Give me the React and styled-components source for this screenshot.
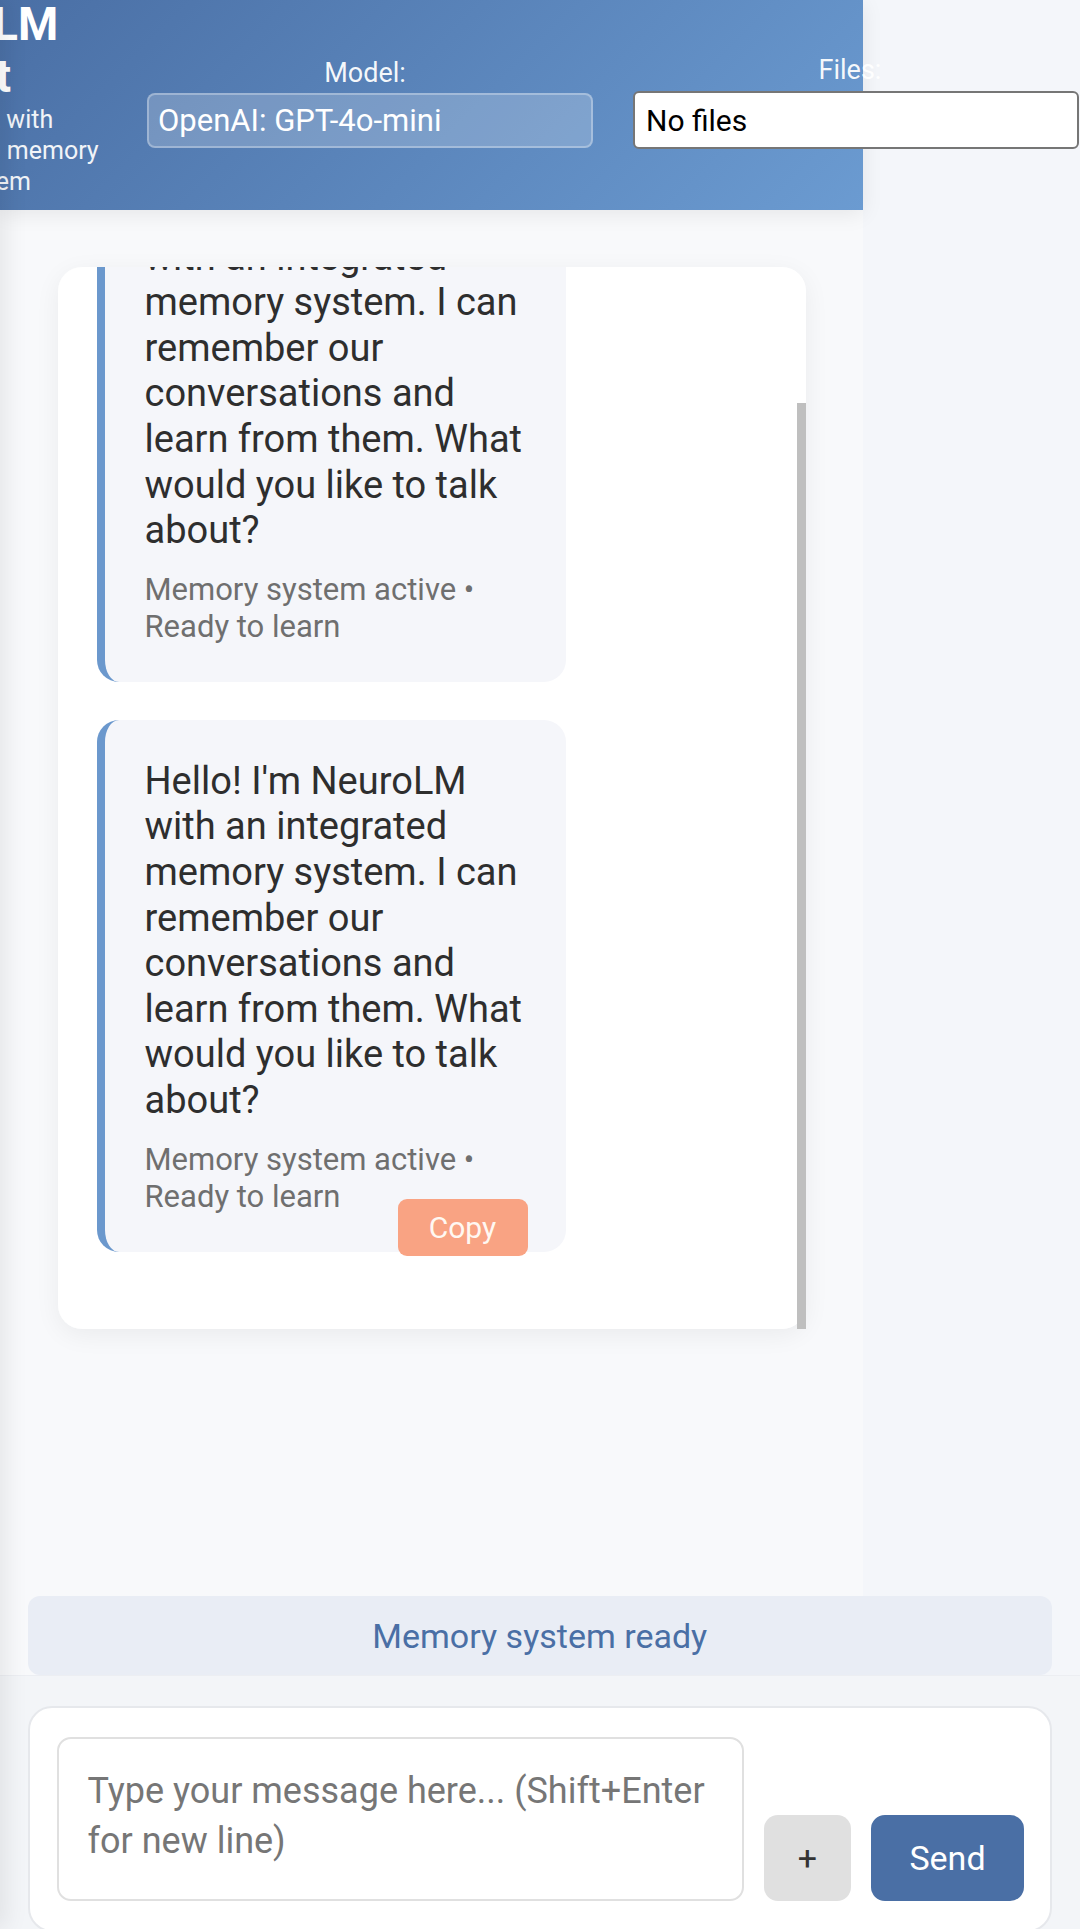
import React, { useLayoutEffect, useRef, useState } from 'react';
import styled, { createGlobalStyle } from 'styled-components';

const GlobalStyle = createGlobalStyle`
  html, body {
    margin: 0;
    padding: 0;
  }
  body {
    background: #f6f7fa;
    font-family: Roboto, "Noto Sans", "Liberation Sans", sans-serif;
    overflow: hidden;
  }
  * {
    box-sizing: border-box;
  }
`;

const Page = styled.div`
  position: relative;
  width: 1080px;
  height: 1929px;
  display: flex;
  flex-direction: column;
  overflow: hidden;
`;

// off-canvas drawer, only its shadow shows on the left edge
const Drawer = styled.aside`
  position: absolute;
  top: 0;
  left: -320px;
  width: 320px;
  height: 100%;
  background: #ffffff;
  box-shadow: 6px 0 22px rgba(0, 0, 0, 0.08);
  z-index: 5;
`;

const Upper = styled.div`
  flex: 1;
  min-height: 0;
  display: grid;
  grid-template-columns: 863px 1fr;
  grid-template-rows: 210px 1fr auto;
  background: #f8f9fb;
`;

const Aside = styled.div`
  grid-column: 2;
  grid-row: 1 / 4;
  background: #f4f6fa;
`;

const Header = styled.header`
  grid-column: 1;
  grid-row: 1;
  position: relative;
  z-index: 2;
  display: flex;
  align-items: flex-start;
  background: linear-gradient(135deg, #4a6fa5 0%, #6b9bd1 100%);
  box-shadow: 0 4px 20px rgba(0, 0, 0, 0.08);
  color: #ffffff;
`;

const Brand = styled.div`
  flex-shrink: 0;
  width: 280px;
  margin-left: -177px;
  margin-top: -2px;
  text-align: center;
`;

const Title = styled.h1`
  margin: 0;
  font-size: 46px;
  font-weight: 700;
  line-height: 52px;
`;

const Tagline = styled.p`
  margin: 2px 0 0;
  font-size: 25px;
  line-height: 31px;
  opacity: 0.92;
`;

const FieldGroup = styled.div`
  flex-shrink: 0;
  width: 446px;
  margin-top: ${({ $top }) => $top}px;
  margin-left: ${({ $offset }) => $offset}px;
  display: flex;
  flex-direction: column;
  align-items: center;
  gap: ${({ $gap }) => $gap}px;
`;

const FieldLabel = styled.label`
  font-size: 27px;
  line-height: 31px;
  padding-right: ${({ $shift }) => $shift}px;
  color: rgba(255, 255, 255, 0.95);
`;

const Picker = styled.select`
  appearance: none;
  width: 100%;
  height: ${({ $light }) => ($light ? 58 : 55)}px;
  padding: 0 ${({ $light }) => ($light ? 11 : 9)}px;
  font-family: Roboto, "Noto Sans", sans-serif;
  font-size: ${({ $light }) => ($light ? 30 : 31)}px;
  border-radius: ${({ $light }) => ($light ? 6 : 8)}px;
  border: 2px solid ${({ $light }) => ($light ? '#767676' : 'rgba(255, 255, 255, 0.3)')};
  background: ${({ $light }) => ($light ? '#ffffff' : 'rgba(255, 255, 255, 0.2)')};
  color: ${({ $light }) => ($light ? '#000000' : '#ffffff')};
  outline: none;
`;

const ChatCard = styled.section`
  grid-column: 1;
  grid-row: 2;
  align-self: start;
  position: relative;
  margin: 57px 57px 0 57.5px;
  height: 1062px;
  border-radius: 24px;
  box-shadow: 0 6px 26px rgba(0, 0, 0, 0.06);
`;

const ChatViewport = styled.div`
  height: 100%;
  background: #ffffff;
  border-radius: 24px;
  overflow-y: auto;
  scrollbar-width: none;

  &::-webkit-scrollbar {
    display: none;
  }
`;

const ScrollThumb = styled.div`
  position: absolute;
  right: 0;
  width: 9px;
  background: #bfbfbf;
`;

const MessageList = styled.div`
  display: flex;
  flex-direction: column;
  align-items: flex-start;
  gap: 38px;
  padding: 39px 39px 77px;
`;

const Bubble = styled.div`
  position: relative;
  width: 469px;
  padding: 39px 30px 37px 40px;
  background: #f5f6fa;
  border-left: 8px solid #6b98cd;
  border-radius: 22px;
  color: #2e2e2e;
  font-size: 38px;
  line-height: 45.6px;
`;

const BubbleText = styled.p`
  margin: 0;
`;

const Meta = styled.div`
  margin-top: 17px;
  font-size: 31px;
  line-height: 37px;
  color: #6f6f6f;
`;

const CopyButton = styled.button`
  position: absolute;
  right: 38px;
  bottom: -4px;
  width: 130px;
  height: 57px;
  border: none;
  border-radius: 9px;
  background: #f9a383;
  color: #fff8f2;
  font-family: Roboto, "Noto Sans", sans-serif;
  font-size: 30px;
`;

const StatusBar = styled.div`
  grid-column: 1 / 3;
  grid-row: 3;
  margin: 0 28px 0 27.5px;
  height: 79px;
  display: flex;
  align-items: center;
  justify-content: center;
  background: #e9edf5;
  border-radius: 12px;
  color: #4a6fa5;
  font-size: 34px;
`;

const Composer = styled.footer`
  flex-shrink: 0;
  height: 254px;
  padding: 30px 28px 0 27.5px;
  background: #f3f5f8;
  border-top: 1px solid #eceef2;
`;

const InputCard = styled.div`
  display: flex;
  align-items: flex-end;
  gap: 20px;
  padding: 29px 26px 29px 27px;
  background: #ffffff;
  border: 2px solid #e6e8ec;
  border-radius: 24px;
`;

const MessageInput = styled.textarea`
  flex: 1;
  height: 164px;
  padding: 26.5px 20px 0 29px;
  border: 2px solid #e0e0e0;
  border-radius: 14px;
  font-family: Roboto, "Noto Sans", sans-serif;
  font-size: 36px;
  line-height: 50.4px;
  color: #333333;
  resize: none;
  outline: none;

  &::placeholder {
    color: #767676;
  }
`;

const ActionButton = styled.button`
  flex-shrink: 0;
  width: ${({ $primary }) => ($primary ? 153 : 87)}px;
  height: 86px;
  border: none;
  border-radius: 14px;
  background: ${({ $primary }) => ($primary ? '#4a6fa5' : '#e0e0e0')};
  color: ${({ $primary }) => ($primary ? '#ffffff' : '#333333')};
  font-family: Roboto, "Noto Sans", sans-serif;
  font-size: 34px;
`;

const greeting =
  "Hello! I'm NeuroLM with an integrated memory system. I can remember our conversations and learn from them. What would you like to talk about?";

const messages = [
  { id: 1, text: greeting, copy: false },
  { id: 2, text: greeting, copy: true },
];

export default function App() {
  const viewportRef = useRef(null);
  const [thumb, setThumb] = useState(null);

  // chat always sits scrolled to the newest message
  useLayoutEffect(() => {
    const el = viewportRef.current;
    if (!el) return;
    el.scrollTop = el.scrollHeight;
    const visible = el.clientHeight;
    const total = el.scrollHeight;
    if (total > visible) {
      const height = (visible * visible) / total;
      const top = (el.scrollTop / (total - visible)) * (visible - height);
      setThumb({ top, height });
    }
  }, []);

  return (
    <>
      <GlobalStyle />
      <Page>
        <Drawer />
        <Upper>
          <Header>
            <Brand>
              <Title>NeuroLM Chat</Title>
              <Tagline>
                Neural chat with
                <br />
                integrated deep memory
                <br />
                core system
              </Tagline>
            </Brand>
            <FieldGroup $top={58} $offset={44} $gap={4}>
              <FieldLabel $shift={10}>Model:</FieldLabel>
              <Picker defaultValue="gpt-4o-mini">
                <option value="gpt-4o-mini">OpenAI: GPT-4o-mini</option>
              </Picker>
            </FieldGroup>
            <FieldGroup $top={55} $offset={40} $gap={5}>
              <FieldLabel $shift={12}>Files:</FieldLabel>
              <Picker $light defaultValue="none">
                <option value="none">No files</option>
              </Picker>
            </FieldGroup>
          </Header>
          <Aside />
          <ChatCard>
            <ChatViewport ref={viewportRef}>
              <MessageList>
                {messages.map((m) => (
                  <Bubble key={m.id}>
                    <BubbleText>{m.text}</BubbleText>
                    <Meta>Memory system active • Ready to learn</Meta>
                    {m.copy && <CopyButton>Copy</CopyButton>}
                  </Bubble>
                ))}
              </MessageList>
            </ChatViewport>
            {thumb && <ScrollThumb style={{ top: thumb.top, height: thumb.height }} />}
          </ChatCard>
          <StatusBar>Memory system ready</StatusBar>
        </Upper>
        <Composer>
          <InputCard>
            <MessageInput placeholder="Type your message here... (Shift+Enter for new line)" />
            <ActionButton>+</ActionButton>
            <ActionButton $primary>Send</ActionButton>
          </InputCard>
        </Composer>
      </Page>
    </>
  );
}
